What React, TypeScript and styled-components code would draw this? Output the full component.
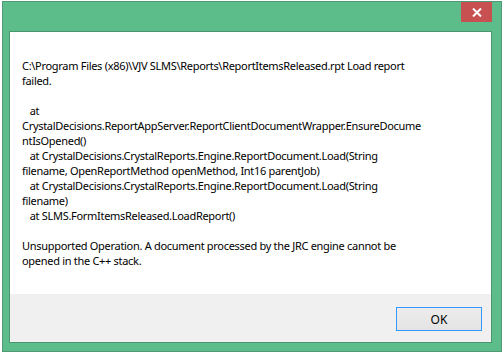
import styled, { createGlobalStyle } from 'styled-components'

const GlobalStyle = createGlobalStyle`
    html, body {
        margin: 0;
        padding: 0;
        background: #ffffff;
    }
    body {
        font-family: 'Noto Sans', 'Liberation Sans', sans-serif;
    }
`

const Window = styled.div`
    box-sizing: border-box;
    width: 500px;
    height: 351px;
    margin: 1px 0 0 2px;
    background-color: #5cbd8b;
    border: 1px solid #4f9a74;
    padding: 0 9px 8px 6px;
    display: flex;
    flex-direction: column;
`

const TitleBar = styled.div`
    height: 29px;
    display: flex;
    justify-content: flex-end;
    align-items: flex-start;
`

const CloseButton = styled.div`
    width: 31px;
    height: 20px;
    background-color: #c75050;
    display: flex;
    align-items: center;
    justify-content: center;
`

const Client = styled.div`
    flex: 1;
    display: flex;
    flex-direction: column;
    border: 1px solid #4a9670;
`

const Message = styled.div`
    flex: 1;
    background-color: #ffffff;
    padding: 26px 12px 0 12px;
    color: #000;
    font-size: 11px;
    letter-spacing: -0.3px;
    line-height: 15px;
    white-space: pre;
`

const Footer = styled.div`
    height: 48px;
    background-color: #f0f0f0;
    display: flex;
    justify-content: flex-end;
    align-items: flex-start;
    padding: 13px 9px 0 0;
    box-sizing: border-box;
`

const Button = styled.button`
    width: 86px;
    height: 24px;
    box-sizing: border-box;
    border: 1px solid #3399ff;
    background: linear-gradient(#ececec, #e4e4e4);
    font-family: inherit;
    font-size: 12px;
    color: #000;
    padding: 0;
`

const lines = [
    'C:\\Program Files (x86)\\VJV SLMS\\Reports\\ReportItemsReleased.rpt Load report',
    'failed.',
    '',
    '   at',
    'CrystalDecisions.ReportAppServer.ReportClientDocumentWrapper.EnsureDocume',
    'ntIsOpened()',
    '   at CrystalDecisions.CrystalReports.Engine.ReportDocument.Load(String',
    'filename, OpenReportMethod openMethod, Int16 parentJob)',
    '   at CrystalDecisions.CrystalReports.Engine.ReportDocument.Load(String',
    'filename)',
    '   at SLMS.FormItemsReleased.LoadReport()',
    '',
    'Unsupported Operation. A document processed by the JRC engine cannot be',
    'opened in the C++ stack.',
]

export default function App() {
    return (
        <>
            <GlobalStyle />
            <Window>
                <TitleBar>
                    <CloseButton>
                        <svg width="10" height="9" viewBox="0 0 10 9">
                            <path d="M1 0.5 L9 8.5 M9 0.5 L1 8.5" stroke="#fff" strokeWidth="2" />
                        </svg>
                    </CloseButton>
                </TitleBar>
                <Client>
                    <Message>{lines.join('\n')}</Message>
                    <Footer>
                        <Button>OK</Button>
                    </Footer>
                </Client>
            </Window>
        </>
    )
}
